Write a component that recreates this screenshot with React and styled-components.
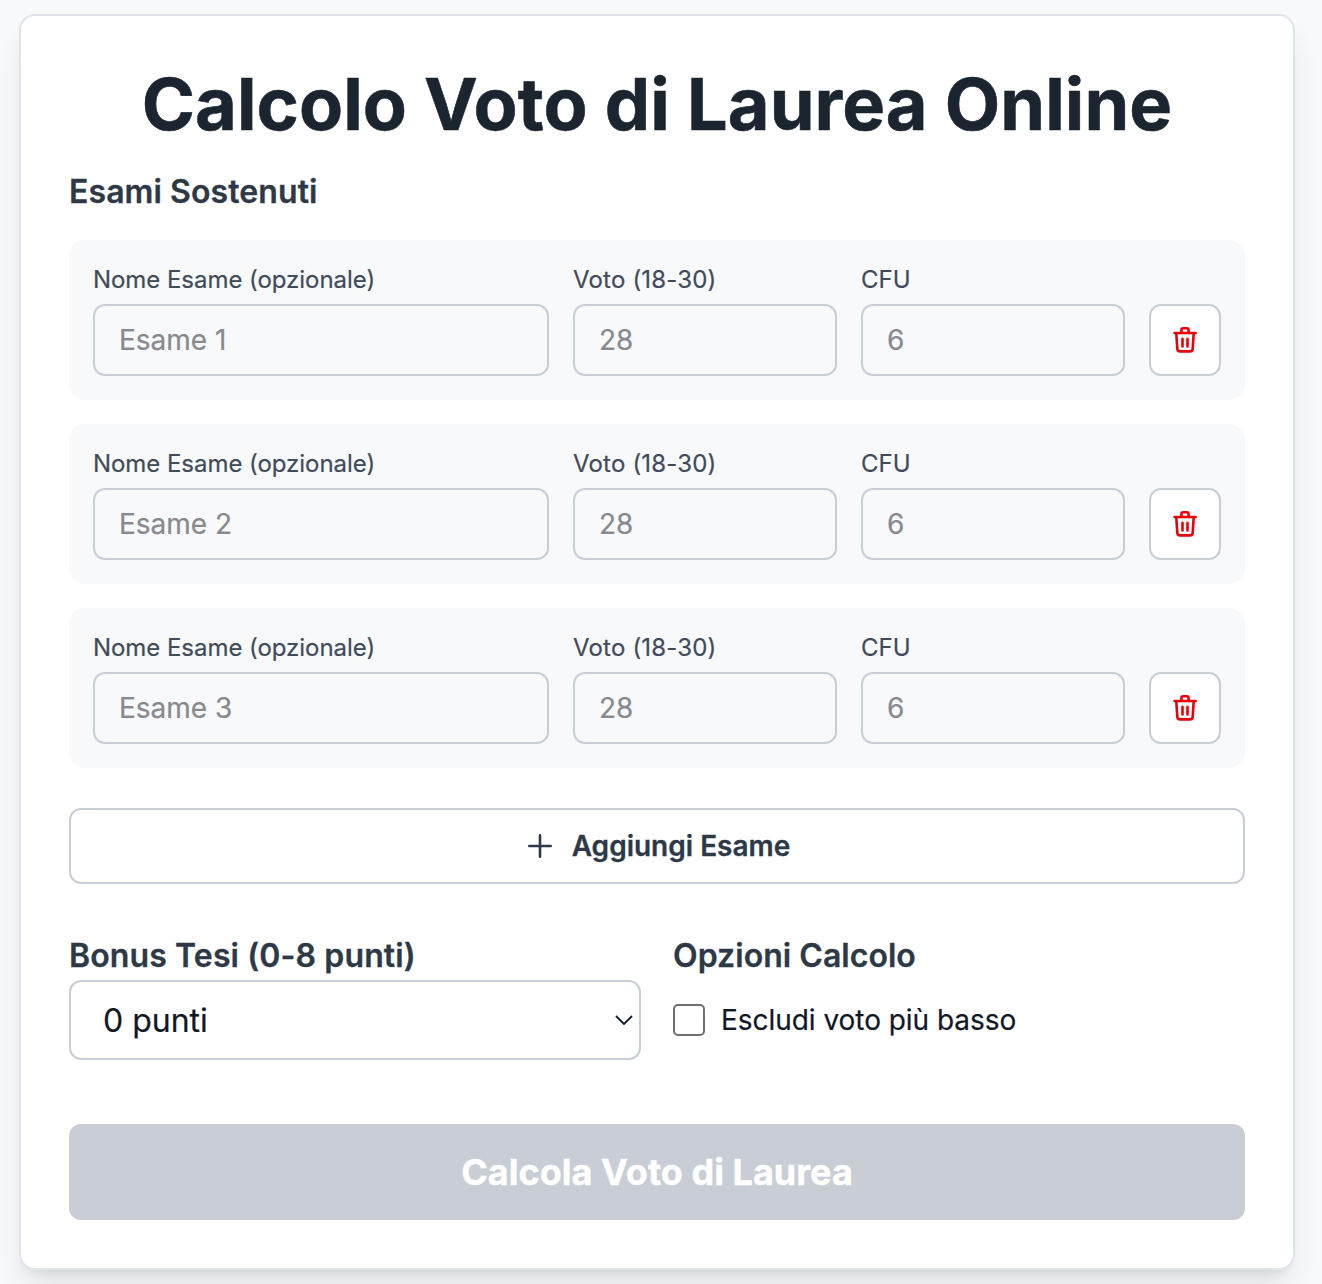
import React, { useState } from "react";
import styled, { createGlobalStyle } from "styled-components";

const GlobalStyle = createGlobalStyle`
  *, *::before, *::after { box-sizing: border-box; }
  body {
    margin: 0;
    background: #f8f9fb;
    color: #101828;
    font-family: Inter, "Liberation Sans", sans-serif;
    overflow: hidden;
  }
  button, input, select { font: inherit; margin: 0; }
`;

const Page = styled.main`
  height: 1284px;
  padding: 14px 27px 0 19px;
`;

const Card = styled.section`
  height: 1256px;
  padding: 48px;
  border: 2px solid #e1e4ea;
  border-radius: 16px;
  background: #fff;
  box-shadow: 0 20px 30px -6px rgba(0, 0, 0, 0.1), 0 8px 12px -8px rgba(0, 0, 0, 0.1);
`;

const Title = styled.h1`
  margin: 0;
  font-size: 72px;
  line-height: 80px;
  font-weight: 700;
  text-align: center;
  white-space: nowrap;
  letter-spacing: 0.07px;
  color: #1b2530;
  -webkit-text-stroke: 0.6px currentColor;
`;

const Heading = styled.h2`
  margin: 0;
  font-size: 32px;
  line-height: 48px;
  font-weight: 600;
  letter-spacing: ${(p) => p.$tracking || "0.09px"};
  color: #2d3947;
  -webkit-text-stroke: 0.3px currentColor;
`;

const ExamSection = styled.div`
  margin-top: 24px;
`;

const ExamList = styled.div`
  display: grid;
  gap: 24px;
  margin-top: 24px;
`;

const ExamRow = styled.div`
  display: grid;
  grid-template-columns: 456px 264px 264px 72px;
  column-gap: 24px;
  align-items: end;
  height: 160px;
  padding: 24px;
  border-radius: 16px;
  background: #f8f9fb;
`;

const Field = styled.label`
  display: grid;
  gap: 8px;
  font-size: 24px;
  line-height: 32px;
  letter-spacing: ${(p) => p.$tracking || "0"};
  color: #3f4b5a;
  -webkit-text-stroke: 0.2px currentColor;
`;

const Input = styled.input`
  width: 100%;
  height: 72px;
  padding: 0 24px;
  border: 2px solid #c9ced6;
  border-radius: 12px;
  outline: none;
  background: transparent;
  color: #101828;
  font-size: 28px;
  letter-spacing: 0;
  &::placeholder { color: #87898f; opacity: 1; }
`;

const DeleteButton = styled.button`
  display: grid;
  place-items: center;
  height: 72px;
  padding: 0;
  border: 2px solid #c9ced6;
  border-radius: 12px;
  background: #fff;
  color: #e7000b;
`;

const AddButton = styled.button`
  display: flex;
  align-items: center;
  justify-content: center;
  gap: 16px;
  width: 100%;
  height: 76px;
  margin-top: 40px;
  border: 2px solid #c9ced6;
  border-radius: 12px;
  background: #fff;
  color: #2d3947;
  font-size: 28px;
  font-weight: 600;
  -webkit-text-stroke: 0.3px currentColor;
`;

const Options = styled.div`
  display: grid;
  grid-template-columns: 572px 572px;
  gap: 32px;
  margin-top: 48px;
`;

const SelectFrame = styled.div`
  display: grid;
  grid-template-columns: 1fr 20px;
  align-items: center;
  height: 80px;
  padding-right: 5px;
  border: 2px solid #c9ced6;
  border-radius: 12px;
  background: #fff;
`;

const Select = styled.select`
  grid-area: 1 / 1 / 2 / 3;
  appearance: none;
  width: 100%;
  height: 76px;
  padding: 0 32px;
  border: 0;
  outline: none;
  background: transparent;
  color: #101828;
  font-size: 32px;
  -webkit-text-stroke: 0.2px currentColor;
`;

const Chevron = styled.svg`
  grid-area: 1 / 2;
  pointer-events: none;
`;

const CheckLabel = styled.label`
  display: flex;
  align-items: center;
  gap: 16px;
  height: 80px;
  font-size: 28px;
  letter-spacing: -0.04px;
  -webkit-text-stroke: 0.2px currentColor;
`;

const Checkbox = styled.input`
  appearance: none;
  width: 32px;
  height: 32px;
  border: 2px solid #6f6f6f;
  border-radius: 5px;
  background: #fff;
  &:checked { background: #101828; }
`;

const Submit = styled.button`
  width: 100%;
  height: 96px;
  margin-top: 64px;
  border: 0;
  border-radius: 12px;
  background: #c9ced6;
  color: #fff;
  font-size: 36px;
  font-weight: 700;
  letter-spacing: 0.03px;
  -webkit-text-stroke: 0.4px currentColor;
`;

const TrashIcon = () => (
  <svg width="28" height="28" viewBox="0 0 28 28" fill="none" stroke="currentColor" strokeWidth="2.6" strokeLinecap="round" strokeLinejoin="round">
    <path d="M3.5 7H24.5" />
    <path d="M10.4 7V4Q10.4 2.2 12.2 2.2H15.8Q17.6 2.2 17.6 4V7" />
    <path d="M5.3 7.2L6.3 22.9Q6.5 25.4 9 25.4H19Q21.5 25.4 21.7 22.9L22.7 7.2" />
    <path d="M11.5 12.9V20.4M16.5 12.9V20.4" />
  </svg>
);

const PlusIcon = () => (
  <svg width="32" height="32" viewBox="0 0 32 32" fill="none" stroke="currentColor" strokeWidth="2.6" strokeLinecap="round">
    <path d="M16 5.3V26.7M5.3 16H26.7" />
  </svg>
);

function Exam({ number, onRemove }) {
  return (
    <ExamRow>
      <Field $tracking="-0.05px">Nome Esame (opzionale)<Input placeholder={`Esame ${number}`} /></Field>
      <Field $tracking="0.18px">Voto (18-30)<Input placeholder="28" /></Field>
      <Field>CFU<Input placeholder="6" /></Field>
      <DeleteButton aria-label="Elimina" onClick={onRemove}><TrashIcon /></DeleteButton>
    </ExamRow>
  );
}

export default function App() {
  const [exams, setExams] = useState([1, 2, 3]);
  return (
    <>
      <GlobalStyle />
      <Page>
        <Card>
          <Title>Calcolo Voto di Laurea Online</Title>
          <ExamSection>
            <Heading>Esami Sostenuti</Heading>
            <ExamList>
              {exams.map((n) => (
                <Exam key={n} number={n} onRemove={() => setExams(exams.filter((e) => e !== n))} />
              ))}
            </ExamList>
            <AddButton onClick={() => setExams([...exams, Math.max(0, ...exams) + 1])}>
              <PlusIcon />Aggiungi Esame
            </AddButton>
          </ExamSection>
          <Options>
            <div>
              <Heading $tracking="0.12px">Bonus Tesi (0-8 punti)</Heading>
              <SelectFrame>
                <Select defaultValue="0">
                  <option value="0">0 punti</option>
                </Select>
                <Chevron width="20" height="20" viewBox="0 0 20 20" fill="none" stroke="currentColor" strokeWidth="1.8">
                  <path d="M2 6L10 14L18 6" />
                </Chevron>
              </SelectFrame>
            </div>
            <div>
              <Heading $tracking="0.04px">Opzioni Calcolo</Heading>
              <CheckLabel><Checkbox type="checkbox" />Escludi voto più basso</CheckLabel>
            </div>
          </Options>
          <Submit>Calcola Voto di Laurea</Submit>
        </Card>
      </Page>
    </>
  );
}
